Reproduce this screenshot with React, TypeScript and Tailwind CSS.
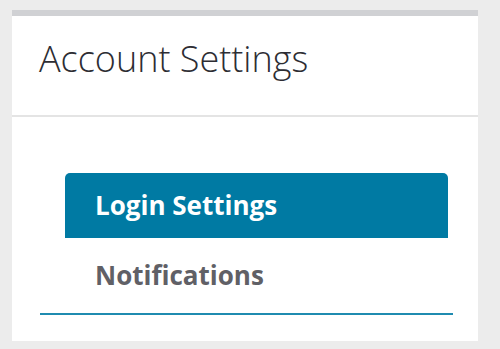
export default function App() {
  return (
    <div className="min-h-[349px] w-[500px] bg-[#ececec] pt-[10px] pl-[12px] font-['Open_Sans',sans-serif]">
      <div className="w-[466px] bg-white border-t-[6px] border-[#d0d1d4]">
        <div className="h-[101px] border-b-2 border-[#e4e4e4] pl-[27px] pt-[25px]">
          <h1 className="text-[36px] font-light leading-none text-[#2d2d33]">Account Settings</h1>
        </div>
        <div className="pl-[28px] pr-[25px] pt-[56px] pb-[26px]">
          <div className="pl-[25px] pr-[5px]">
            <div className="h-[65px] rounded-t-[5px] bg-[#007aa3] pl-[30px] flex items-center">
              <span className="text-[26px] font-bold text-white">Login Settings</span>
            </div>
            <div className="h-[75px] pl-[30px] flex items-center">
              <span className="text-[26px] font-bold text-[#606066]">Notifications</span>
            </div>
          </div>
          <div className="h-[2px] bg-[#1f8bb0]" />
        </div>
      </div>
    </div>
  );
}
